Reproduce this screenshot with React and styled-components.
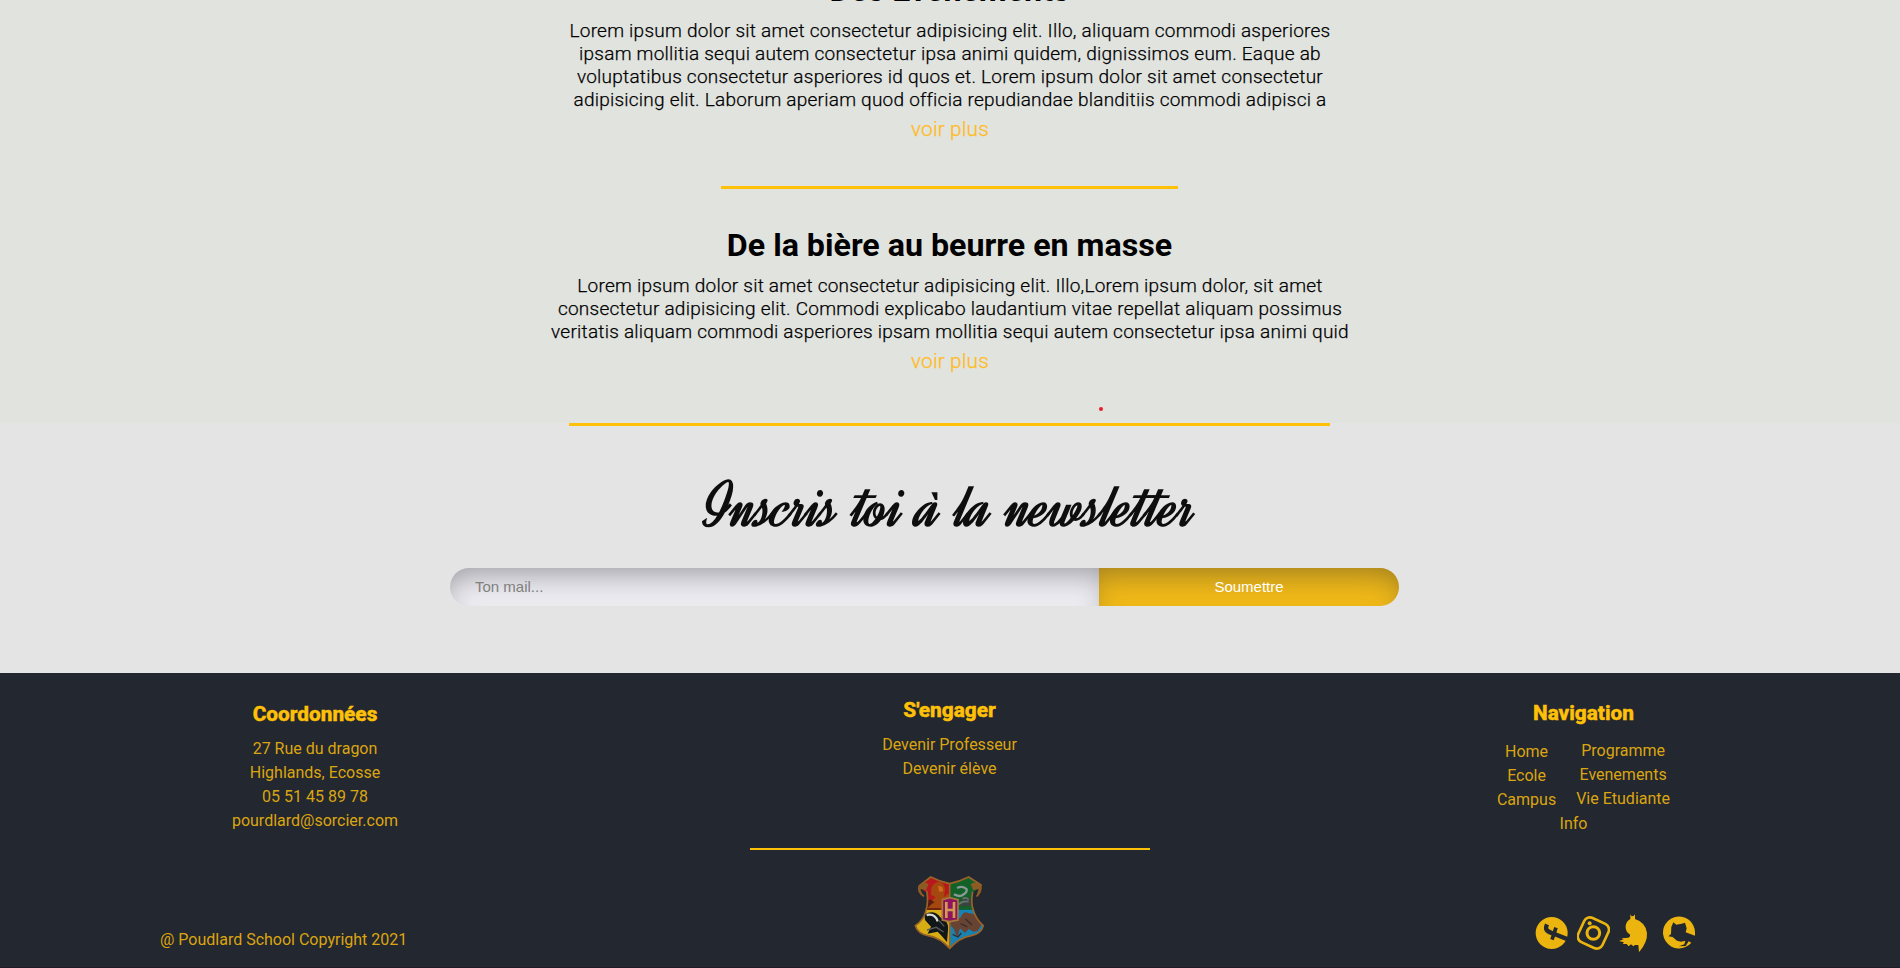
import React from "react";
import styled, { createGlobalStyle } from "styled-components";

const GlobalStyle = createGlobalStyle`
  * { box-sizing: border-box; margin: 0; padding: 0; }
  body { background: #e4e4e4; font-family: Roboto, "Liberation Sans", sans-serif; color: #000; overflow: hidden; }
`;

const Page = styled.div`
  height: 968px;
  overflow: hidden;
  display: flex;
  flex-direction: column;
`;

const Advantages = styled.main`
  position: relative;
  height: 423px;
  flex: none;
  background: #e1e3df;
  display: flex;
  flex-direction: column;
  align-items: center;
`;

const Article = styled.article`
  display: flex;
  flex-direction: column;
  align-items: center;
  text-align: center;
  margin-top: ${(p) => p.$top}px;
`;

const Title = styled.h2`
  font-size: 32.2px;
  line-height: 38px;
  font-weight: 700;
  white-space: nowrap;
  margin-right: 1px;
`;

const Text = styled.p`
  margin-top: ${(p) => p.$gap}px;
  font-size: 19px;
  font-weight: 300;
  line-height: 23px;
  letter-spacing: 0.235px;
  -webkit-text-stroke: 0.25px currentColor;
  white-space: nowrap;
`;

const More = styled.a`
  margin-top: ${(p) => p.$gap}px;
  font-size: 20.8px;
  line-height: 24px;
  font-weight: 300;
  letter-spacing: 0.15px;
  -webkit-text-stroke: 0.25px currentColor;
  color: #ffbb1c;
`;

const Rule = styled.hr`
  flex: none;
  border: 0;
  width: ${(p) => p.$width}px;
  height: ${(p) => p.$thick || 3}px;
  margin: ${(p) => p.$top || 0}px ${(p) => p.$right || 0}px 0 0;
  background: #ffc107;
`;

const Marker = styled.span`
  position: absolute;
  left: 1099px;
  top: 407px;
  width: 4px;
  height: 4px;
  border-radius: 50%;
  background: #ed1c24;
`;

const Newsletter = styled.section`
  height: 250px;
  flex: none;
  display: flex;
  flex-direction: column;
  align-items: center;
`;

const ScriptTitle = styled.h2`
  height: 80px;
  margin-top: 41px;
  font-family: Dynalight, Parisienne, "Liberation Serif", serif;
  font-size: 65px;
  font-weight: 400;
  line-height: 80px;
  -webkit-text-stroke: 1.6px currentColor;
  color: #0e0e0e;
  white-space: nowrap;
`;

const Form = styled.form`
  display: flex;
  width: 949px;
  height: 38px;
  margin: 21px 51px 0 0;
`;

const MailInput = styled.input`
  flex: 1;
  min-width: 0;
  border: 0;
  padding: 0 25px 2px;
  border-radius: 19px 0 0 19px;
  background: #efeef3;
  box-shadow: inset 0 16px 30px -10px rgba(35, 39, 46, 0.42);
  font: 15px "Liberation Sans", sans-serif;
  &::placeholder { color: #808080; opacity: 1; }
`;

const Submit = styled.button`
  width: 300px;
  border: 0;
  padding-bottom: 2px;
  border-radius: 0 19px 19px 0;
  background: #f2ba18;
  box-shadow: inset 0 16px 30px -10px rgba(35, 39, 46, 0.42);
  color: #fff;
  font: 15px "Liberation Sans", sans-serif;
`;

const Footer = styled.footer`
  height: 295px;
  flex: none;
  background: #23272f;
  border-bottom: 1px solid #201c27;
  color: #dba510;
  display: flex;
  flex-direction: column;
  align-items: center;
`;

const Columns = styled.div`
  display: grid;
  grid-template-columns: 630px 639px 629px;
  height: 175px;
  margin-right: 2px;
`;

const Column = styled.section`
  display: flex;
  flex-direction: column;
  align-items: center;
  padding-top: ${(p) => p.$top}px;
`;

const FooterTitle = styled.h3`
  color: #ffc107;
  font-size: 20.8px;
  line-height: 24px;
  font-weight: 800;
  -webkit-text-stroke: 0.4px currentColor;
`;

const List = styled.ul`
  list-style: none;
  text-align: center;
  font-size: 16px;
  line-height: 24px;
  margin-top: ${(p) => p.$gap || 0}px;
`;

const NavLists = styled.div`
  display: flex;
  align-items: flex-start;
  gap: 20px;
`;

const InfoLink = styled.a`
  font-size: 16px;
  line-height: 24px;
  margin-right: 20px;
`;

const Bottom = styled.div`
  width: 100%;
  height: 117px;
  display: grid;
  grid-template-columns: 1fr 72px 1fr;
  padding: 0 160px;
`;

const Copyright = styled.p`
  font-size: 16px;
  line-height: 24px;
  margin-top: 78px;
`;

const CrestSvg = styled.svg`
  width: 72px;
  height: 75px;
  margin-top: 25px;
`;

const Socials = styled.div`
  display: flex;
  justify-content: flex-end;
  margin: 63px 44px 0 0;
`;

const SocialIcon = styled.svg`
  display: block;
  height: 40px;
  width: ${(p) => p.$width}px;
  margin-left: ${(p) => p.$gap}px;
  fill: #ecb40e;
`;

const Crest = () => (
  <CrestSvg viewBox="74 44 216 225" aria-label="Poudlard">
    <defs>
      <clipPath id="shield">
        <path d="M92 72 L124 50 Q152 64 181 70 Q210 64 238 50 L272 72 Q262 92 250 96 Q244 128 252 150 Q260 178 282 196 Q276 220 246 226 Q210 232 181 264 Q152 232 116 226 Q86 220 78 196 Q104 178 110 150 Q118 124 112 96 Q98 92 92 72Z" />
      </clipPath>
    </defs>
    <g clipPath="url(#shield)">
      <path fill="#b8171b" d="M74 44h107v104H74z" />
      <path fill="#126128" d="M181 44h109v104H181z" />
      <path fill="#d8ac14" d="M74 148h107v122H74z" />
      <path fill="#1683b5" d="M181 148h109v122H181z" />
      <path fill="#5a1c0e" d="M74 118h80v30H74z" />
      <path fill="#a5480f" d="M126 82q8-18 26-17q18 8 14 30l-2 16 12-12 5 10-23 35h-44l14-14 8-4-9-6 12-9-14-8z" />
      <path fill="#d06c1d" d="M146 76l13 4 3 12-12 3z" />
      <path fill="none" stroke="#8b9894" strokeWidth="7" d="M194 102q13 8 24 3q16-8 14-18q-11-12-29-4" />
      <path fill="#39443f" d="M214 126q4-18 20-16 16 4 10 28h-31z" />
      <path fill="none" stroke="#68736f" strokeWidth="5" d="M208 132q12-12 30-8M220 116q10-7 18 2" />
      <path fill="#111719" d="M105 162q30-16 48 9q27 13 23 38l-3 37-15-18-13-14-30 6 10-21-18-20z" />
      <path fill="none" stroke="#d7dad3" strokeWidth="7" d="M112 164q25-6 33 19" />
      <path fill="none" stroke="#55595a" strokeWidth="4" d="M113 209l28-8 22 14M148 180l17 18" />
      <path fill="#684332" d="M185 178q24 8 34-16q6-10 18-4q32 4 44 28l-16 26-14 2-12-8-12 12-15-14-8 28-11-26-10-12z" />
      <path fill="none" stroke="#302e30" strokeWidth="4" d="M190 222l16 8 10-12M228 175l20 19M214 190l20 10" />
    </g>
    <path fill="none" stroke="#996428" strokeWidth="5" d="M104 108Q84 94 90 76 L124 50 Q152 64 181 70 Q210 64 238 50 L275 74 Q274 98 262 108 M112 91 Q118 124 110 150 Q104 178 78 196 Q86 220 116 226 Q152 232 181 264 Q210 232 246 226 Q276 220 282 196 Q260 178 252 150 Q244 128 250 94 M181 68V264" />
    <path fill="#8d5a24" d="M88 76q17-17 30-4l-8 18-17-4 10 24q-23-16-15-34M274 76q-17-17-30-4l8 18 16-4-8 24q23-16 14-34" />
    <path fill="#8c155b" stroke="#a9773e" strokeWidth="5" d="M159 118l22-6 25 6v61l-25 5-22-5z" />
    <path fill="none" stroke="#d29b54" strokeWidth="8" d="M171 125v48M194 125v48M171 149h23" />
  </CrestSvg>
);

const Facebook = () => (
  <SocialIcon $width={33} $gap={0} viewBox="46 38 99 120">
    <circle cx="96" cy="98" r="48" />
    <g fill="none" stroke="#23272f">
      <path strokeWidth="13" d="M150 119L104 101Q86 95 81 89Q77 83 82 72" />
      <path strokeWidth="11" d="M109 82L97 118" />
    </g>
  </SocialIcon>
);

const Instagram = () => (
  <SocialIcon $width={33} $gap={9} viewBox="173 38 99 120">
    <g fill="none" stroke="#ecb40e">
      <rect x="182" y="58" width="80" height="80" rx="19" strokeWidth="8" transform="rotate(25 222 98)" />
      <circle cx="222" cy="98" r="19" strokeWidth="9" />
    </g>
    <circle cx="211" cy="69" r="6" />
  </SocialIcon>
);

const Twitter = () => (
  <SocialIcon $width={29} $gap={9} viewBox="298 38 87 120">
    <path d="M332 42L336 48L342 47L346 42L346 56Q378 66 382 98Q384 126 358 156L356 134L346 134L341 138L334 132L327 138L321 131L309 131L313 126L298 122L312 117L305 114L326 112Q334 109 330 102Q316 92 318 76Q320 62 332 56Z" />
  </SocialIcon>
);

const Github = () => (
  <SocialIcon $width={33} $gap={15} viewBox="430 38 99 120">
    <path d="M526 96A48 48 0 1 0 515 127L507 123L498 137L478 138L494 132L497 121L484 124L472 121L459 110L446 108L454 101L455 80L461 66L470 73L486 70L496 67L501 84L498 96L526 106Z" />
  </SocialIcon>
);

export default function App() {
  return (
    <>
      <GlobalStyle />
      <Page>
        <Advantages>
          <Article $top={-29}>
            <Title>Des Evenements</Title>
            <Text $gap={10}>
              Lorem ipsum dolor sit amet consectetur adipisicing elit. Illo, aliquam commodi asperiores<br />
              ipsam mollitia sequi autem consectetur ipsa animi quidem, dignissimos eum. Eaque ab<br />
              voluptatibus consectetur asperiores id quos et. Lorem ipsum dolor sit amet consectetur<br />
              adipisicing elit. Laborum aperiam quod officia repudiandae blanditiis commodi adipisci a
            </Text>
            <More $gap={6}>voir plus</More>
          </Article>
          <Rule $width={457} $top={45} $right={1} />
          <Article $top={37}>
            <Title>De la bière au beurre en masse</Title>
            <Text $gap={10}>
              Lorem ipsum dolor sit amet consectetur adipisicing elit. Illo,Lorem ipsum dolor, sit amet<br />
              consectetur adipisicing elit. Commodi explicabo laudantium vitae repellat aliquam possimus<br />
              veritatis aliquam commodi asperiores ipsam mollitia sequi autem consectetur ipsa animi quid
            </Text>
            <More $gap={6}>voir plus</More>
          </Article>
          <Marker />
        </Advantages>
        <Newsletter>
          <Rule $width={761} $right={1} />
          <ScriptTitle>Inscris toi à la newsletter</ScriptTitle>
          <Form>
            <MailInput placeholder="Ton mail..." />
            <Submit type="button">Soumettre</Submit>
          </Form>
        </Newsletter>
        <Footer>
          <Columns>
            <Column $top={29}>
              <FooterTitle>Coordonnées</FooterTitle>
              <List $gap={11}>
                <li>27 Rue du dragon</li>
                <li>Highlands, Ecosse</li>
                <li>05 51 45 89 78</li>
                <li>pourdlard@sorcier.com</li>
              </List>
            </Column>
            <Column $top={25}>
              <FooterTitle>S'engager</FooterTitle>
              <List $gap={11}>
                <li>Devenir Professeur</li>
                <li>Devenir élève</li>
              </List>
            </Column>
            <Column $top={28}>
              <FooterTitle>Navigation</FooterTitle>
              <NavLists>
                <List $gap={15}>
                  <li>Home</li>
                  <li>Ecole</li>
                  <li>Campus</li>
                </List>
                <List $gap={14}>
                  <li>Programme</li>
                  <li>Evenements</li>
                  <li>Vie Etudiante</li>
                </List>
              </NavLists>
              <InfoLink>Info</InfoLink>
            </Column>
          </Columns>
          <Rule $width={400} $thick={2} />
          <Bottom>
            <Copyright>@ Poudlard School Copyright 2021</Copyright>
            <Crest />
            <Socials>
              <Facebook />
              <Instagram />
              <Twitter />
              <Github />
            </Socials>
          </Bottom>
        </Footer>
      </Page>
    </>
  );
}
